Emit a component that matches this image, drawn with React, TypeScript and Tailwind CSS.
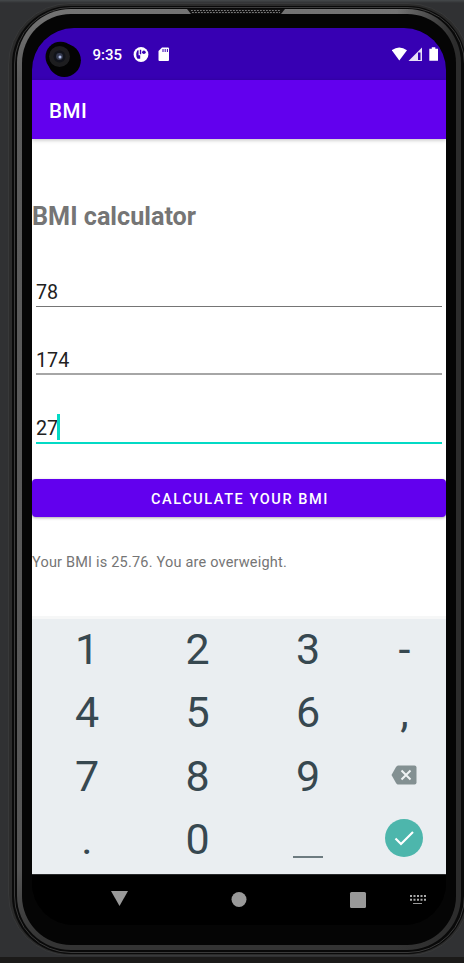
import React from "react";

function Field({ value, className, active = false }: { value: string; className: string; active?: boolean }) {
  return (
    <div className={className + " mx-1 flex h-[33px] shrink-0 items-start text-[19.7px] text-[#212121]"}>
      <span>{value}</span>
      {active && <span className="-ml-[1px] mt-[3px] h-[26px] w-[3px] bg-[#03dac5]" />}
    </div>
  );
}

function Key({ children }: { children?: React.ReactNode }) {
  return <div className="flex h-[63.3px] items-center justify-center">{children}</div>;
}

function Digit({ children }: { children: React.ReactNode }) {
  return (
    <Key>
      <span className="pt-[1px]">{children}</span>
    </Key>
  );
}

function StatusBar() {
  return (
    <div className="flex h-[52px] shrink-0 items-start bg-[#3700b3] text-white">
      <svg className="ml-[13px] mt-[13px]" width="37" height="38" viewBox="0 0 37 38">
        <circle cx="15.5" cy="15.8" r="15" fill="#050505" />
        <circle cx="19.3" cy="19.3" r="16.6" fill="#030303" />
        <circle cx="14.5" cy="15.5" r="10.5" fill="#1d1d1f" />
        <circle cx="14.5" cy="15.5" r="6" fill="#11131a" />
        <circle cx="14.5" cy="15.5" r="3.4" fill="#363b50" />
        <circle cx="15" cy="16" r="1.5" fill="#aebbe5" />
      </svg>
      <span className="ml-[10.5px] mt-[17px] w-[40px] text-[15px] font-medium leading-[20px]">9:35</span>
      <svg className="mt-[18px]" width="17" height="17" viewBox="0 0 17 17">
        <circle cx="8" cy="8.500" r="7.400" fill="#fff" />
        <path d="M4.500 4.300q-2.800 4.200 0 8.400H7.200V9.300H5.600V4.300z" fill="#3700b3" />
        <path d="M6.800 3.800h1.400v4.400H6.800z" fill="#3700b3" />
        <circle cx="10.900" cy="6.300" r="1.800" fill="#3700b3" />
      </svg>
      <svg className="ml-[8px] mt-[19px]" width="12" height="15" viewBox="0 0 12 15">
        <path d="M4 .5h6q1 0 1 1V13q0 1-1 1H1.500q-1 0-1-1V4z" fill="#fff" />
        <path d="M5 2v3M7.200 2v3M9.400 2v3" stroke="#3700b3" strokeWidth="1" />
      </svg>
      <svg className="ml-auto mr-[6px] mt-[19px]" width="48" height="16" viewBox="0 0 48 16">
        <path d="M-.3 3.200q7.500-5.500 15.300 0L7.300 13.500z" fill="#fff" />
        <path d="M16.500 14 30 .5V14z" fill="#fff" opacity=".88" />
        <path d="M26 5.500h2.500v7.500H26z" fill="#3700b3" />
        <path d="M37.300 1.800h2.500V.3h3.500v1.500H46v12h-8.700z" fill="#fff" />
      </svg>
    </div>
  );
}

export default function App() {
  return (
    <main className="flex h-[963px] w-[464px] items-start overflow-hidden bg-[linear-gradient(to_bottom,#45494b_0px,#303133_3px,#303133_957px,#1b1a19_957px)] font-['Roboto',sans-serif]">
      <div className="ml-[8px] mt-[3px] h-[953px] w-[462px] shrink-0 rounded-[62px] border border-[#38393a] bg-[#2b2b2b] px-[3px] py-[1.5px]">
        <div className="h-full rounded-[58px] bg-[#0a0a0a] px-[1.5px] py-px">
          <div className="h-full rounded-[57px] border border-[#3a3a3a] bg-[#090909] px-[2.5px] py-[1.5px]">
            <div className="h-full rounded-[54px] bg-[linear-gradient(to_right,transparent_380px,#2c2c2c_438px),linear-gradient(to_bottom,#747474_0px,#5c5c5c_70px,#565656_860px,#343434_930px)] p-[5px]">
              <div className="h-full rounded-[49px] bg-[#050505]">
                <svg className="relative -top-[5px] ml-[165px] block" width="98" height="6" viewBox="0 0 98 6">
                  <path d="M0 0h98l-4 5H4z" fill="#101010" />
                  <path d="M4 1.500h90M5 3.500h88" stroke="#777" strokeWidth="1.200" strokeDasharray="1.800 1.200" />
                </svg>
                <div className="ml-[10px] mt-[8px] flex h-[897px] w-[414px] flex-col overflow-hidden rounded-[42px] bg-black">
                  <StatusBar />
                  <header className="relative z-10 flex h-[59px] shrink-0 items-center bg-[#6200ee] px-[17px] pt-[3px] text-[20.5px] font-medium tracking-[0.6px] text-white shadow-[0_1px_4px_#0004]">
                    BMI
                  </header>
                  <div className="flex h-[477px] shrink-0 flex-col bg-white">
                    <h1 className="mt-[62px] text-[25.2px] font-bold leading-[32px] text-[#757575]">BMI calculator</h1>
                    <Field value="78" className="mt-[41px] border-b border-[#757575] leading-[38px]" />
                    <Field value="174" className="mt-[35px] border-b-2 border-[#a6a6a6] leading-[38px]" />
                    <Field value="27" className="mt-[36px] border-b-2 border-[#03dac5] leading-[36px]" active />
                    <button className="mt-[35px] h-[38px] shrink-0 rounded-[4px] bg-[#6200ee] pl-[2px] pt-[3px] text-[14.5px] font-medium tracking-[1.58px] text-white shadow-[0_1px_3px_#0005]">
                      CALCULATE YOUR BMI
                    </button>
                    <p className="mt-[36px] text-[14.5px] leading-5 tracking-[0.2px] text-[#757575]">
                      Your BMI is 25.76. You are overweight.
                    </p>
                  </div>
                  <div className="h-[258px] shrink-0 border-t-[3px] border-[#f6f7f7] bg-[#eaeef1] text-[#374850]">
                    <div className="-mt-[2px] grid grid-cols-[110px_111px_110px_83px] text-[43px]">
                      <Digit>1</Digit><Digit>2</Digit><Digit>3</Digit><Digit>-</Digit>
                      <Digit>4</Digit><Digit>5</Digit><Digit>6</Digit><Digit>,</Digit>
                      <Digit>7</Digit><Digit>8</Digit><Digit>9</Digit>
                      <Key>
                        <svg className="mr-px" width="26" height="20" viewBox="0 0 26 20">
                          <path d="M7 .5h16.500q2 0 2 2v15q0 2-2 2H7Q6 19.500 5 18L.5 10l4.500-8Q6 .5 7 .5" fill="#839092" />
                          <path d="m10.500 5.500 9 9m0-9-9 9" stroke="#eef2f4" strokeWidth="2" />
                        </svg>
                      </Key>
                      <Digit>.</Digit><Digit>0</Digit>
                      <Key><div className="mt-[37px] h-[2px] w-[30px] bg-[#6d7b80]" /></Key>
                      <Key>
                        <svg className="mb-px mr-[2px]" width="38" height="38" viewBox="0 0 38 38">
                          <circle cx="19" cy="19" r="19" fill="#4db6ac" />
                          <path d="m10.500 19.500 5.500 5.500 12-12" fill="none" stroke="#fff" strokeWidth="2.200" />
                        </svg>
                      </Key>
                    </div>
                  </div>
                  <nav className="flex h-[51px] shrink-0 items-start border-t border-[#28292a] bg-black">
                    <svg className="mt-[16px]" width="414" height="18" viewBox="0 0 414 18" fill="#999">
                      <path d="M79 0h17L87.500 15z" />
                      <circle cx="207" cy="8.500" r="7.500" />
                      <rect x="318" y="1" width="16" height="16" rx="1.500" />
                      <path d="M378 5h16M378 8.700h16" stroke="#aaa" strokeWidth="2" strokeDasharray="2 1.500" />
                      <path d="M381 12h9v1h-9z" />
                    </svg>
                  </nav>
                </div>
              </div>
            </div>
          </div>
        </div>
      </div>
    </main>
  );
}
